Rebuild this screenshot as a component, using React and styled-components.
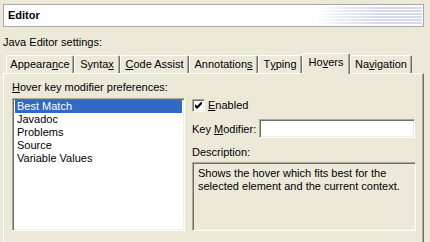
import React from "react";
import styled, { createGlobalStyle } from "styled-components";

const Global = createGlobalStyle`
  html, body { margin: 0; padding: 0; }
  body {
    background: #ECE9D8;
    font-family: "Liberation Sans", Arial, sans-serif;
    font-size: 11px;
    color: #000;
    width: 430px;
    height: 242px;
    overflow: hidden;
  }
  u { text-decoration: underline; text-underline-offset: 1px; }
`;

const Page = styled.div`
  display: flex;
  flex-direction: column;
  padding: 4px 6px 0 3px;
  width: 430px;
  box-sizing: border-box;
`;

const TitleBox = styled.div`
  display: flex;
  align-items: center;
  height: 23px;
  box-sizing: border-box;
  border: 1px solid #a7a6aa;
  background: #fff;
  padding: 0 1px 0 4px;
`;

const TitleText = styled.div`
  font-weight: bold;
  font-size: 11px;
  line-height: 13px;
`;

const Banner = styled.div`
  margin-left: auto;
  width: 106px;
  height: 18px;
  background: repeating-linear-gradient(
    to bottom,
    #d3dbec 0px,
    #d3dbec 2px,
    #ffffff 2px,
    #ffffff 3px
  );
  -webkit-mask-image: linear-gradient(to right, transparent 0%, rgba(0,0,0,0.5) 25%, #000 60%);
  mask-image: linear-gradient(to right, transparent 0%, rgba(0,0,0,0.5) 25%, #000 60%);
`;

const Label = styled.div`
  line-height: 13px;
  white-space: nowrap;
  margin-top: ${(p) => p.$mt || 0}px;
`;

const TabRow = styled.div`
  display: flex;
  align-items: flex-end;
  height: 20px;
  margin-top: 4px;
  padding-left: 3px;
  position: relative;
  z-index: 2;
`;

const Tab = styled.div`
  width: ${(p) => p.$w}px;
  height: ${(p) => (p.$active ? 21 : 18)}px;
  margin-bottom: ${(p) => (p.$active ? -1 : 0)}px;
  box-sizing: border-box;
  background: #ECE9D8;
  border-top: 1px solid #fff;
  border-left: 1px solid #fff;
  border-right: 1px solid #716f64;
  box-shadow: inset -1px 0 #aca899;
  border-radius: 2px 2px 0 0;
  display: flex;
  justify-content: center;
  align-items: ${(p) => (p.$active ? "flex-start" : "center")};
  padding-top: ${(p) => (p.$active ? 2 : 0)}px;
  line-height: 13px;
  white-space: nowrap;
`;

const Panel = styled.div`
  height: 169px;
  box-sizing: border-box;
  border-top: 1px solid #fff;
  border-left: 1px solid #fff;
  border-right: 1px solid #716f64;
  box-shadow: inset -1px 0 #aca899;
  padding: 7px 7px 0 8px;
  display: flex;
  flex-direction: column;
`;

const Columns = styled.div`
  display: flex;
  gap: 7px;
  margin-top: 4px;
`;

const Sunken = styled.div`
  box-sizing: border-box;
  border: 1px solid;
  border-color: #aca899 #fff #fff #aca899;
  box-shadow: inset 1px 1px #716f64, inset -1px -1px #f1efe2;
`;

const ListBox = styled(Sunken)`
  width: 173px;
  height: 133px;
  background: #fff;
  padding: 1px 2px;
`;

const ListItem = styled.div`
  height: 13px;
  line-height: 13px;
  padding-left: 2px;
  white-space: nowrap;
  background: ${(p) => (p.$selected ? "#316AC5" : "transparent")};
  color: ${(p) => (p.$selected ? "#fff" : "#000")};
`;

const RightCol = styled.div`
  flex: 1;
  display: flex;
  flex-direction: column;
`;

const CheckRow = styled.div`
  display: flex;
  align-items: center;
  gap: 3px;
  margin-top: 1px;
  height: 13px;
  line-height: 13px;
`;

const CheckBox = styled(Sunken)`
  width: 13px;
  height: 13px;
  background: #fff;
  display: flex;
  align-items: center;
  justify-content: center;
`;

const FieldRow = styled.div`
  display: flex;
  align-items: center;
  gap: 3px;
  margin-top: 7px;
  padding-right: 1px;
`;

const TextInput = styled(Sunken)`
  flex: 1;
  height: 19px;
  background: #fff;
`;

const DescBox = styled(Sunken)`
  margin-top: 3px;
  height: 69px;
  background: #ECE9D8;
  padding: 4px 8px 0 5px;
  line-height: 13px;
`;

const tabs = [
  { w: 68, label: <>Appeara<u>n</u>ce</> },
  { w: 46, label: <>Synta<u>x</u></> },
  { w: 69, label: <><u>C</u>ode Assist</> },
  { w: 69, label: <>Annotation<u>s</u></> },
  { w: 44, label: <>T<u>y</u>ping</> },
  { w: 48, label: <>Ho<u>v</u>ers</>, active: true },
  { w: 62, label: <>Na<u>v</u>igation</> },
];

const items = ["Best Match", "Javadoc", "Problems", "Source", "Variable Values"];

export default function App() {
  return (
    <>
      <Global />
      <Page>
        <TitleBox>
          <TitleText>Editor</TitleText>
          <Banner />
        </TitleBox>
        <Label $mt={9}>Java Editor settings:</Label>
        <TabRow>
          {tabs.map((t, i) => (
            <Tab key={i} $w={t.w} $active={t.active}>
              {t.label}
            </Tab>
          ))}
        </TabRow>
        <Panel>
          <Label>
            <u>H</u>over key modifier preferences:
          </Label>
          <Columns>
            <ListBox>
              {items.map((it, i) => (
                <ListItem key={it} $selected={i === 0}>
                  {it}
                </ListItem>
              ))}
            </ListBox>
            <RightCol>
              <CheckRow>
                <CheckBox>
                  <svg width="7" height="7" viewBox="0 0 7 7">
                    <path d="M0 2 L0 5 L2 7 L7 2 L7 -1 L2 4 Z" fill="#000" />
                  </svg>
                </CheckBox>
                <span>
                  <u>E</u>nabled
                </span>
              </CheckRow>
              <FieldRow>
                <span>
                  Key <u>M</u>odifier:
                </span>
                <TextInput />
              </FieldRow>
              <Label $mt={8}>Description:</Label>
              <DescBox>
                Shows the hover which fits best for the selected element and the current context.
              </DescBox>
            </RightCol>
          </Columns>
        </Panel>
      </Page>
    </>
  );
}
